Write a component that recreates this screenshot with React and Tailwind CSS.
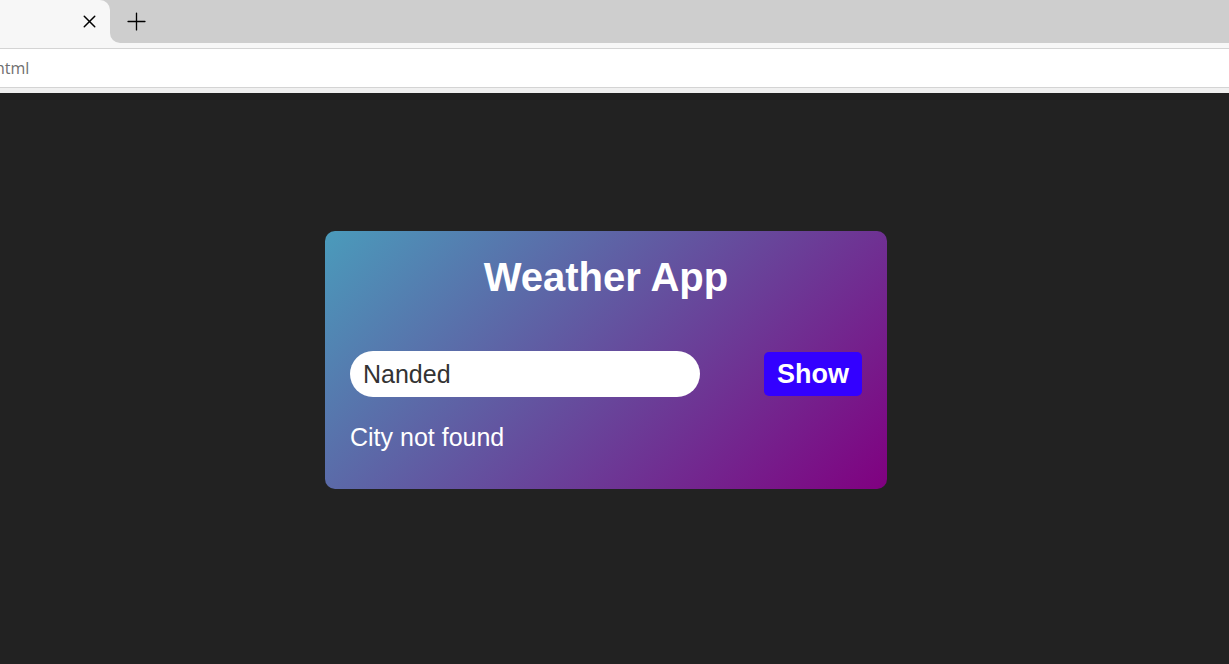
import { X, Plus } from 'lucide-react';

export default function App() {
  return (
    <div className="w-[1229px] h-[664px] flex flex-col bg-[#222222] overflow-hidden font-['Liberation_Sans',Arial,sans-serif]">
      {/* browser tabs */}
      <div className="h-[43px] flex bg-[#cecece]">
        <div className="w-[110px] bg-[#f7f7f7] rounded-tr-[10px] flex items-center justify-end pr-[10px]">
          <X size={21} strokeWidth={1.7} className="text-black" />
        </div>
        <div className="flex-1 bg-[#f7f7f7]">
          <div className="h-full bg-[#cecece] rounded-bl-[10px] flex items-center pl-[12px]">
            <Plus size={29} strokeWidth={1.1} className="text-black" />
          </div>
        </div>
      </div>
      {/* address bar */}
      <div className="h-[5px] bg-[#f7f7f7]" />
      <div className="h-[40px] bg-white border-y border-[#d4d4d4] flex items-center overflow-hidden">
        <span className="ml-[-5px] text-[16px] text-[#6f6f6f] font-['Open_Sans',sans-serif]">html</span>
      </div>
      <div className="h-[5px] bg-[#f0f0f0]" />

      {/* page */}
      <div className="flex-1 w-[1212px] flex justify-center pt-[138px]">
        <div className="w-[562px] h-[258px] rounded-[10px] bg-[linear-gradient(135deg,#4a9bbb,#800080)] px-[25px] pt-[23px]">
          <h1 className="text-[40px] leading-[46px] font-bold text-white text-center">Weather App</h1>
          <div className="mt-[51px] flex items-center justify-between">
            <input
              defaultValue="Nanded"
              className="w-[350px] h-[46px] rounded-full bg-white pl-[13px] text-[25px] text-[#333333] outline-none"
            />
            <button className="h-[44px] px-[13px] rounded-[5px] bg-[#3300ff] text-white text-[27px] font-bold">
              Show
            </button>
          </div>
          <p className="mt-[26px] text-[25px] leading-[29px] text-white">City not found</p>
        </div>
      </div>
    </div>
  );
}
